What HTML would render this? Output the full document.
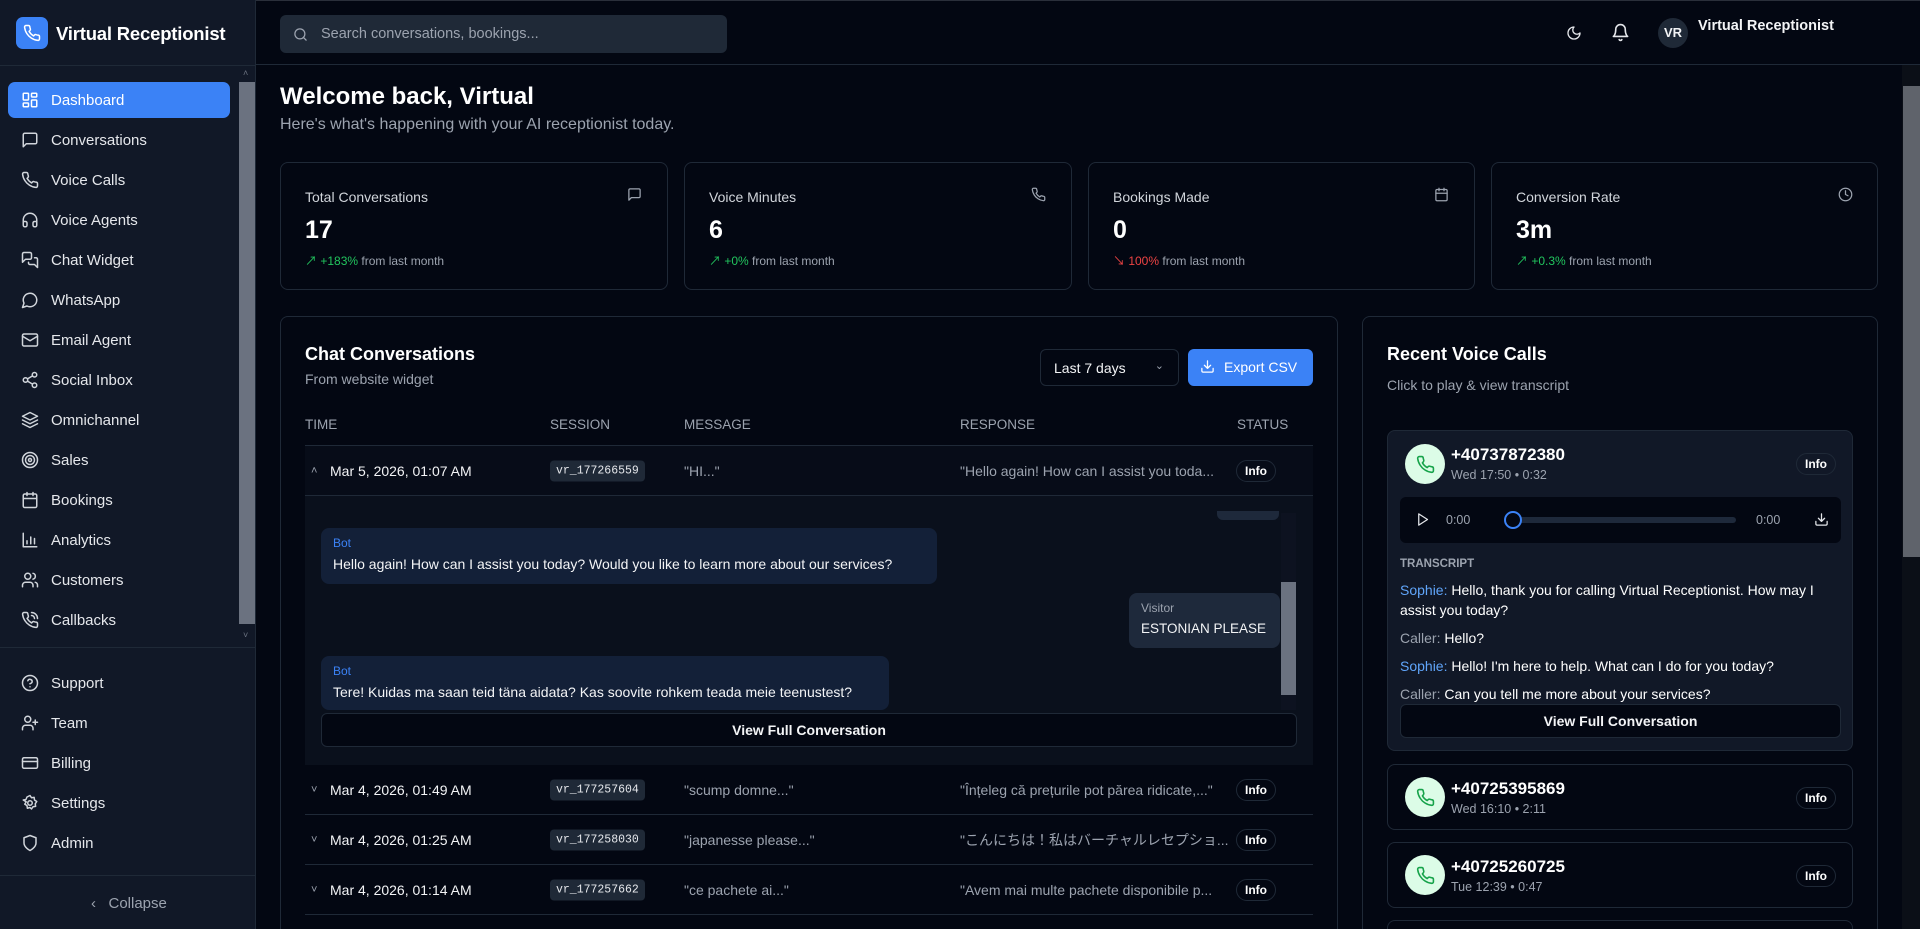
<!DOCTYPE html>
<html><head><meta charset="utf-8"><style>
*{box-sizing:border-box;margin:0;padding:0}
html,body{width:1920px;height:929px;overflow:hidden}
body{background:#030712;font-family:"Liberation Sans","Noto Sans CJK JP",sans-serif;color:#f3f4f6}
#wrap{position:relative;width:1920px;height:929px;overflow:hidden}
.abs{position:absolute}
svg{fill:none;stroke:currentColor;stroke-width:2;stroke-linecap:round;stroke-linejoin:round}
#side{left:0;top:0;width:256px;height:929px;background:#111827;border-right:1px solid #1f2937}
.logo{left:16px;top:17px;width:32px;height:32px;background:#3b82f6;border-radius:7px;display:flex;align-items:center;justify-content:center;color:#fff}
.brand{left:56px;top:23px;font-size:18.5px;font-weight:bold;color:#fff;letter-spacing:-0.2px}
.nav{position:absolute;left:8px;width:222px;height:36px;border-radius:7px;display:flex;align-items:center;font-size:15px;color:#e5e7eb}
.nav svg{width:18px;height:18px;margin-left:13px;margin-right:12px;color:#d1d5db}
.nav.act{background:#3b82f6;color:#fff}.nav.act svg{color:#fff}
.hdr{left:256px;top:0;width:1664px;height:65px;border-bottom:1px solid #1f2937;border-top:1px solid #2a2f3a}
.card{position:absolute;border:1px solid #1f2937;border-radius:8px;background:#030712}
.card.open{border-bottom:none;border-bottom-left-radius:0;border-bottom-right-radius:0}
.lbl{font-size:14px;color:#d1d5db}
.val{font-size:25px;font-weight:bold;color:#fff}
.sub{font-size:12px;color:#9ca3af}
.th{position:absolute;top:417px;font-size:13.5px;color:#9ca3af}
.row{position:absolute;left:305px;width:1008px;height:50px;border-bottom:1px solid #1f2937;font-size:14px}
.row span{position:absolute;top:50%;transform:translateY(-50%);white-space:nowrap}
.sess{background:#1f2937;font-family:"Liberation Mono",monospace;font-size:11.5px;padding:4px 6px;border-radius:4px;color:#e5e7eb}
.info{border:1px solid #1f2937;border-radius:12px;padding:3px 8px;font-size:12px;font-weight:bold;color:#fff}
.bub{position:absolute;border-radius:8px;padding:8px 12px;white-space:nowrap}
.ccard{position:absolute;left:1387px;width:466px;border:1px solid #1f2937;border-radius:8px}
.av{position:absolute;left:17px;width:40px;height:40px;border-radius:50%;background:#dcfce7;color:#16a34a;display:flex;align-items:center;justify-content:center}
.av svg{width:19px;height:19px}
.pn{position:absolute;left:63px;font-size:17px;font-weight:bold;color:#fff}
.ps{position:absolute;left:63px;font-size:12.5px;color:#9ca3af}
.tl{position:absolute;left:1400px;font-size:14px;color:#fff;width:445px;line-height:20px}
.tl b{font-weight:normal;color:#60a5fa}.tl i{font-style:normal;color:#9ca3af}
</style></head><body><div id="wrap">
<div id="side" class="abs">
 <div class="abs logo"><svg width="18" height="18" viewBox="0 0 24 24"><path d="M22 16.9v3a2 2 0 0 1-2.2 2 19.8 19.8 0 0 1-8.6-3.1 19.5 19.5 0 0 1-6-6A19.8 19.8 0 0 1 2.1 4.2 2 2 0 0 1 4.1 2h3a2 2 0 0 1 2 1.7c.1 1 .4 1.9.7 2.8a2 2 0 0 1-.5 2.1L8.1 9.9a16 16 0 0 0 6 6l1.3-1.3a2 2 0 0 1 2.1-.4c.9.3 1.8.6 2.8.7a2 2 0 0 1 1.7 2z"/></svg></div>
 <div class="abs brand">Virtual Receptionist</div>
 <div class="abs" style="left:0;top:65px;width:256px;border-top:1px solid #1f2937"></div>
 <div class="abs" style="left:239px;top:67px;width:16px;height:580px;background:#111827"></div>
 <div class="abs" style="left:239px;top:82px;width:16px;height:542px;background:#6b7280"></div>
 <div class="abs" style="left:243px;top:68px;font-size:9px;color:#6b7280">˄</div>
 <div class="abs" style="left:243px;top:630px;font-size:9px;color:#6b7280">˅</div>
 <div class="nav act" style="top:82px"><svg viewBox="0 0 24 24"><rect x="3" y="3" width="7" height="9" rx="1"/><rect x="14" y="3" width="7" height="5" rx="1"/><rect x="14" y="12" width="7" height="9" rx="1"/><rect x="3" y="16" width="7" height="5" rx="1"/></svg>Dashboard</div>
 <div class="nav" style="top:122px"><svg viewBox="0 0 24 24"><path d="M21 15a2 2 0 0 1-2 2H7l-4 4V5a2 2 0 0 1 2-2h14a2 2 0 0 1 2 2z"/></svg>Conversations</div>
 <div class="nav" style="top:162px"><svg viewBox="0 0 24 24"><path d="M22 16.9v3a2 2 0 0 1-2.2 2 19.8 19.8 0 0 1-8.6-3.1 19.5 19.5 0 0 1-6-6A19.8 19.8 0 0 1 2.1 4.2 2 2 0 0 1 4.1 2h3a2 2 0 0 1 2 1.7c.1 1 .4 1.9.7 2.8a2 2 0 0 1-.5 2.1L8.1 9.9a16 16 0 0 0 6 6l1.3-1.3a2 2 0 0 1 2.1-.4c.9.3 1.8.6 2.8.7a2 2 0 0 1 1.7 2z"/></svg>Voice Calls</div>
 <div class="nav" style="top:202px"><svg viewBox="0 0 24 24"><path d="M3 14h3a2 2 0 0 1 2 2v3a2 2 0 0 1-2 2H5a2 2 0 0 1-2-2v-7a9 9 0 0 1 18 0v7a2 2 0 0 1-2 2h-1a2 2 0 0 1-2-2v-3a2 2 0 0 1 2-2h3"/></svg>Voice Agents</div>
 <div class="nav" style="top:242px"><svg viewBox="0 0 24 24"><path d="M14 9a2 2 0 0 1-2 2H6l-4 4V4a2 2 0 0 1 2-2h8a2 2 0 0 1 2 2z"/><path d="M18 9h2a2 2 0 0 1 2 2v11l-4-4h-6a2 2 0 0 1-2-2v-1"/></svg>Chat Widget</div>
 <div class="nav" style="top:282px"><svg viewBox="0 0 24 24"><path d="M7.9 20A9 9 0 1 0 4 16.1L2 22z"/></svg>WhatsApp</div>
 <div class="nav" style="top:322px"><svg viewBox="0 0 24 24"><rect x="2" y="4" width="20" height="16" rx="2"/><path d="m22 7-10 6L2 7"/></svg>Email Agent</div>
 <div class="nav" style="top:362px"><svg viewBox="0 0 24 24"><circle cx="18" cy="5" r="3"/><circle cx="6" cy="12" r="3"/><circle cx="18" cy="19" r="3"/><path d="m8.6 13.5 6.8 4M15.4 6.5l-6.8 4"/></svg>Social Inbox</div>
 <div class="nav" style="top:402px"><svg viewBox="0 0 24 24"><path d="m12 2 10 5-10 5L2 7z"/><path d="m2 17 10 5 10-5M2 12l10 5 10-5"/></svg>Omnichannel</div>
 <div class="nav" style="top:442px"><svg viewBox="0 0 24 24"><circle cx="12" cy="12" r="10"/><circle cx="12" cy="12" r="6"/><circle cx="12" cy="12" r="2"/></svg>Sales</div>
 <div class="nav" style="top:482px"><svg viewBox="0 0 24 24"><rect x="3" y="4" width="18" height="18" rx="2"/><path d="M16 2v4M8 2v4M3 10h18"/></svg>Bookings</div>
 <div class="nav" style="top:522px"><svg viewBox="0 0 24 24"><path d="M3 3v18h18M8 17v-4M13 17V8M18 17v-7"/></svg>Analytics</div>
 <div class="nav" style="top:562px"><svg viewBox="0 0 24 24"><path d="M16 21v-2a4 4 0 0 0-4-4H6a4 4 0 0 0-4 4v2"/><circle cx="9" cy="7" r="4"/><path d="M22 21v-2a4 4 0 0 0-3-3.9M16 3.1a4 4 0 0 1 0 7.8"/></svg>Customers</div>
 <div class="nav" style="top:602px"><svg viewBox="0 0 24 24"><path d="M22 16.9v3a2 2 0 0 1-2.2 2 19.8 19.8 0 0 1-8.6-3.1 19.5 19.5 0 0 1-6-6A19.8 19.8 0 0 1 2.1 4.2 2 2 0 0 1 4.1 2h3a2 2 0 0 1 2 1.7c.1 1 .4 1.9.7 2.8a2 2 0 0 1-.5 2.1L8.1 9.9a16 16 0 0 0 6 6l1.3-1.3a2 2 0 0 1 2.1-.4c.9.3 1.8.6 2.8.7a2 2 0 0 1 1.7 2zM14 2a8 8 0 0 1 8 8M14 6a4 4 0 0 1 4 4"/></svg>Callbacks</div>
 <div class="abs" style="left:0;top:647px;width:256px;border-top:1px solid #1f2937"></div>
 <div class="nav" style="top:665px"><svg viewBox="0 0 24 24"><circle cx="12" cy="12" r="10"/><path d="M9.1 9a3 3 0 0 1 5.8 1c0 2-3 3-3 3M12 17h.01"/></svg>Support</div>
 <div class="nav" style="top:705px"><svg viewBox="0 0 24 24"><path d="M16 21v-2a4 4 0 0 0-4-4H6a4 4 0 0 0-4 4v2"/><circle cx="9" cy="7" r="4"/><path d="M19 8v6M22 11h-6"/></svg>Team</div>
 <div class="nav" style="top:745px"><svg viewBox="0 0 24 24"><rect x="2" y="5" width="20" height="14" rx="2"/><path d="M2 10h20"/></svg>Billing</div>
 <div class="nav" style="top:785px"><svg viewBox="0 0 24 24"><circle cx="12" cy="12" r="3"/><path d="M12 2l2 3 3.5-.5.5 3.5 3 2-2 3 .5 3.5-3.5.5-2 3-2-2-3.5 1-.5-3.5-3-2 2-3L3 8l3.5-.5L8 4z"/></svg>Settings</div>
 <div class="nav" style="top:825px"><svg viewBox="0 0 24 24"><path d="M12 22s8-4 8-10V5l-8-3-8 3v7c0 6 8 10 8 10z"/></svg>Admin</div>
 <div class="abs" style="left:0;top:875px;width:256px;border-top:1px solid #1f2937"></div>
 <div class="abs" style="left:91px;top:895px;font-size:15px;color:#9ca3af">‹&nbsp;&nbsp;&nbsp;Collapse</div>
</div>

<div class="abs hdr"></div>
<div class="abs" style="left:280px;top:15px;width:447px;height:38px;background:#1f2937;border-radius:6px;font-size:14.5px;color:#9ca3af;padding:11px 0 0 41px">Search conversations, bookings...
 <svg class="abs" style="left:13px;top:12px;width:15px;height:15px" viewBox="0 0 24 24"><circle cx="11" cy="11" r="8"/><path d="m21 21-4.3-4.3"/></svg></div>
<svg class="abs" style="left:1566px;top:25px;width:16px;height:16px;color:#e5e7eb" viewBox="0 0 24 24"><path d="M12 3a6 6 0 0 0 9 9 9 9 0 1 1-9-9z"/></svg>
<svg class="abs" style="left:1611px;top:23px;width:19px;height:19px;color:#e5e7eb" viewBox="0 0 24 24"><path d="M6 8a6 6 0 0 1 12 0c0 7 3 9 3 9H3s3-2 3-9M10.3 21a1.9 1.9 0 0 0 3.4 0"/></svg>
<div class="abs" style="left:1658px;top:18px;width:30px;height:30px;border-radius:50%;background:#1f2937;font-size:13px;font-weight:bold;text-align:center;line-height:30px">VR</div>
<div class="abs" style="left:1698px;top:18px;font-size:14.5px;font-weight:bold">Virtual Receptionist</div>
<div class="abs" style="left:1902px;top:65px;width:18px;height:864px;background:#0b0f17"></div>
<div class="abs" style="left:1903px;top:86px;width:17px;height:471px;background:#5f636b"></div>

<div class="abs" style="left:280px;top:83px;font-size:24px;font-weight:bold;color:#fff">Welcome back, Virtual</div>
<div class="abs" style="left:280px;top:116px;font-size:16px;color:#9ca3af">Here's what's happening with your AI receptionist today.</div>

<div class="card" style="left:280px;top:162px;width:388px;height:128px"></div>
<div class="card" style="left:684px;top:162px;width:388px;height:128px"></div>
<div class="card" style="left:1088px;top:162px;width:387px;height:128px"></div>
<div class="card" style="left:1491px;top:162px;width:387px;height:128px"></div>
<div class="abs lbl" style="left:305px;top:189px">Total Conversations</div><div class="abs val" style="left:305px;top:216px">17</div><div class="abs sub" style="left:305px;top:252px"><span style="color:#22c55e">↗ +183%</span> from last month</div>
<div class="abs lbl" style="left:709px;top:189px">Voice Minutes</div><div class="abs val" style="left:709px;top:216px">6</div><div class="abs sub" style="left:709px;top:252px"><span style="color:#22c55e">↗ +0%</span> from last month</div>
<div class="abs lbl" style="left:1113px;top:189px">Bookings Made</div><div class="abs val" style="left:1113px;top:216px">0</div><div class="abs sub" style="left:1113px;top:252px"><span style="color:#ef4444">↘ 100%</span> from last month</div>
<div class="abs lbl" style="left:1516px;top:189px">Conversion Rate</div><div class="abs val" style="left:1516px;top:216px">3m</div><div class="abs sub" style="left:1516px;top:252px"><span style="color:#22c55e">↗ +0.3%</span> from last month</div>
<svg class="abs" style="left:627px;top:187px;width:15px;height:15px;color:#9ca3af" viewBox="0 0 24 24"><path d="M21 15a2 2 0 0 1-2 2H7l-4 4V5a2 2 0 0 1 2-2h14a2 2 0 0 1 2 2z"/></svg>
<svg class="abs" style="left:1031px;top:187px;width:15px;height:15px;color:#9ca3af" viewBox="0 0 24 24"><path d="M22 16.9v3a2 2 0 0 1-2.2 2 19.8 19.8 0 0 1-8.6-3.1 19.5 19.5 0 0 1-6-6A19.8 19.8 0 0 1 2.1 4.2 2 2 0 0 1 4.1 2h3a2 2 0 0 1 2 1.7c.1 1 .4 1.9.7 2.8a2 2 0 0 1-.5 2.1L8.1 9.9a16 16 0 0 0 6 6l1.3-1.3a2 2 0 0 1 2.1-.4c.9.3 1.8.6 2.8.7a2 2 0 0 1 1.7 2z"/></svg>
<svg class="abs" style="left:1434px;top:187px;width:15px;height:15px;color:#9ca3af" viewBox="0 0 24 24"><rect x="3" y="4" width="18" height="18" rx="2"/><path d="M16 2v4M8 2v4M3 10h18"/></svg>
<svg class="abs" style="left:1838px;top:187px;width:15px;height:15px;color:#9ca3af" viewBox="0 0 24 24"><circle cx="12" cy="12" r="10"/><path d="M12 6v6l4 2"/></svg>

<div class="card open" style="left:280px;top:316px;width:1058px;height:613px"></div>
<div class="abs" style="left:305px;top:344px;font-size:18px;font-weight:bold;color:#fff">Chat Conversations</div>
<div class="abs" style="left:305px;top:371px;font-size:14px;color:#9ca3af">From website widget</div>
<div class="abs" style="left:1040px;top:349px;width:139px;height:37px;border:1px solid #1f2937;border-radius:6px;font-size:14px;padding:10px 0 0 13px">Last 7 days<span style="position:absolute;right:14px;top:9px;color:#9ca3af;font-size:11px">⌄</span></div>
<div class="abs" style="left:1188px;top:349px;width:125px;height:37px;background:#3b82f6;border-radius:6px;font-size:14px;padding:10px 0 0 36px;color:#fff">Export CSV
 <svg class="abs" style="left:12px;top:10px;width:15px;height:15px" viewBox="0 0 24 24"><path d="M21 15v4a2 2 0 0 1-2 2H5a2 2 0 0 1-2-2v-4M7 10l5 5 5-5M12 15V3"/></svg></div>
<div class="th" style="left:305px">TIME</div><div class="th" style="left:550px">SESSION</div><div class="th" style="left:684px">MESSAGE</div><div class="th" style="left:960px">RESPONSE</div><div class="th" style="left:1237px">STATUS</div>
<div class="abs" style="left:305px;top:445px;width:1008px;border-top:1px solid #1f2937"></div>
<div class="row" style="top:446px;height:50px;background:#070c18">
 <span style="left:6px;color:#9ca3af;font-size:11px">˄</span><span style="left:25px">Mar 5, 2026, 01:07 AM</span>
 <span class="sess" style="left:245px">vr_177266559</span><span style="left:379px;color:#9ca3af">"HI..."</span>
 <span style="left:655px;color:#9ca3af">"Hello again! How can I assist you toda...</span><span class="info" style="left:931px">Info</span></div>
<div class="abs" style="left:305px;top:496px;width:1008px;height:269px;background:#0a101c"></div>
<div class="abs" style="left:1217px;top:511px;width:62px;height:9px;background:#1e293b;border-radius:0 0 6px 6px"></div>
<div class="bub" style="left:321px;top:528px;width:616px;height:56px;background:#132038"><div style="font-size:12px;color:#3b82f6">Bot</div><div style="font-size:14px;margin-top:6px">Hello again! How can I assist you today? Would you like to learn more about our services?</div></div>
<div class="bub" style="left:1129px;top:593px;width:151px;height:55px;background:#1e293b;padding-right:6px"><div style="font-size:12px;color:#9ca3af">Visitor</div><div style="font-size:13.5px;margin-top:6px">ESTONIAN PLEASE</div></div>
<div class="bub" style="left:321px;top:656px;width:568px;height:54px;background:#132038"><div style="font-size:12px;color:#3b82f6">Bot</div><div style="font-size:14px;margin-top:6px">Tere! Kuidas ma saan teid täna aidata? Kas soovite rohkem teada meie teenustest?</div></div>
<div class="abs" style="left:1281px;top:513px;width:15px;height:197px;background:#0d1220"></div>
<div class="abs" style="left:1281px;top:582px;width:15px;height:113px;background:#6b7280"></div>
<div class="abs" style="left:321px;top:713px;width:976px;height:34px;border:1px solid #1f2937;border-radius:6px;background:#030712;font-size:14px;font-weight:bold;text-align:center;line-height:32px">View Full Conversation</div>
<div class="row" style="top:765px"><span style="left:6px;color:#9ca3af;font-size:11px">˅</span><span style="left:25px">Mar 4, 2026, 01:49 AM</span><span class="sess" style="left:245px">vr_177257604</span><span style="left:379px;color:#9ca3af">"scump domne..."</span><span style="left:655px;color:#9ca3af">"Înțeleg că prețurile pot părea ridicate,..."</span><span class="info" style="left:931px">Info</span></div>
<div class="row" style="top:815px"><span style="left:6px;color:#9ca3af;font-size:11px">˅</span><span style="left:25px">Mar 4, 2026, 01:25 AM</span><span class="sess" style="left:245px">vr_177258030</span><span style="left:379px;color:#9ca3af">"japanesse please..."</span><span style="left:655px;color:#9ca3af">"こんにちは！私はバーチャルレセプショ...</span><span class="info" style="left:931px">Info</span></div>
<div class="row" style="top:865px"><span style="left:6px;color:#9ca3af;font-size:11px">˅</span><span style="left:25px">Mar 4, 2026, 01:14 AM</span><span class="sess" style="left:245px">vr_177257662</span><span style="left:379px;color:#9ca3af">"ce pachete ai..."</span><span style="left:655px;color:#9ca3af">"Avem mai multe pachete disponibile p...</span><span class="info" style="left:931px">Info</span></div>

<div class="card open" style="left:1362px;top:316px;width:516px;height:613px"></div>
<div class="abs" style="left:1387px;top:344px;font-size:18px;font-weight:bold;color:#fff">Recent Voice Calls</div>
<div class="abs" style="left:1387px;top:377px;font-size:14px;color:#9ca3af">Click to play &amp; view transcript</div>
<div class="ccard" style="top:430px;height:321px;background:#111827">
 <div class="av" style="top:13px"><svg viewBox="0 0 24 24"><path d="M22 16.9v3a2 2 0 0 1-2.2 2 19.8 19.8 0 0 1-8.6-3.1 19.5 19.5 0 0 1-6-6A19.8 19.8 0 0 1 2.1 4.2 2 2 0 0 1 4.1 2h3a2 2 0 0 1 2 1.7c.1 1 .4 1.9.7 2.8a2 2 0 0 1-.5 2.1L8.1 9.9a16 16 0 0 0 6 6l1.3-1.3a2 2 0 0 1 2.1-.4c.9.3 1.8.6 2.8.7a2 2 0 0 1 1.7 2z"/></svg></div>
 <div class="pn" style="top:14px">+40737872380</div><div class="ps" style="top:37px">Wed 17:50 • 0:32</div>
 <span class="info abs" style="left:408px;top:22px;border-color:#1f2937">Info</span>
 <div class="abs" style="left:12px;top:66px;width:441px;height:46px;background:#030712;border-radius:6px;font-size:12.5px;color:#9ca3af">
  <svg class="abs" style="left:15px;top:15px;width:15px;height:15px;color:#e5e7eb" viewBox="0 0 24 24"><path d="M6 3l14 9-14 9z"/></svg>
  <span class="abs" style="left:46px;top:16px">0:00</span>
  <div class="abs" style="left:110px;top:20px;width:226px;height:6px;background:#1e293b;border-radius:3px"></div>
  <div class="abs" style="left:104px;top:14px;width:18px;height:18px;border:2px solid #3b82f6;border-radius:50%;background:#030712"></div>
  <span class="abs" style="left:356px;top:16px">0:00</span>
  <svg class="abs" style="left:414px;top:15px;width:15px;height:15px;color:#e5e7eb" viewBox="0 0 24 24"><path d="M21 15v4a2 2 0 0 1-2 2H5a2 2 0 0 1-2-2v-4M7 10l5 5 5-5M12 15V3"/></svg>
 </div>
 <div class="abs" style="left:12px;top:127px;font-size:11.5px;color:#9ca3af;font-weight:bold">TRANSCRIPT</div>
</div>
<div class="tl" style="top:580px"><b>Sophie:</b> Hello, thank you for calling Virtual Receptionist. How may I assist you today?</div>
<div class="tl" style="top:628px"><i>Caller:</i> Hello?</div>
<div class="tl" style="top:656px"><b>Sophie:</b> Hello! I'm here to help. What can I do for you today?</div>
<div class="tl" style="top:684px"><i>Caller:</i> Can you tell me more about your services?</div>
<div class="abs" style="left:1400px;top:704px;width:441px;height:34px;background:#030712;border:1px solid #1f2937;border-radius:6px;font-size:14px;font-weight:bold;text-align:center;line-height:32px">View Full Conversation</div>
<div class="ccard" style="top:764px;height:66px">
 <div class="av" style="top:12px"><svg viewBox="0 0 24 24"><path d="M22 16.9v3a2 2 0 0 1-2.2 2 19.8 19.8 0 0 1-8.6-3.1 19.5 19.5 0 0 1-6-6A19.8 19.8 0 0 1 2.1 4.2 2 2 0 0 1 4.1 2h3a2 2 0 0 1 2 1.7c.1 1 .4 1.9.7 2.8a2 2 0 0 1-.5 2.1L8.1 9.9a16 16 0 0 0 6 6l1.3-1.3a2 2 0 0 1 2.1-.4c.9.3 1.8.6 2.8.7a2 2 0 0 1 1.7 2z"/></svg></div>
 <div class="pn" style="top:14px">+40725395869</div><div class="ps" style="top:37px">Wed 16:10 • 2:11</div><span class="info abs" style="left:408px;top:22px">Info</span></div>
<div class="ccard" style="top:842px;height:66px">
 <div class="av" style="top:12px"><svg viewBox="0 0 24 24"><path d="M22 16.9v3a2 2 0 0 1-2.2 2 19.8 19.8 0 0 1-8.6-3.1 19.5 19.5 0 0 1-6-6A19.8 19.8 0 0 1 2.1 4.2 2 2 0 0 1 4.1 2h3a2 2 0 0 1 2 1.7c.1 1 .4 1.9.7 2.8a2 2 0 0 1-.5 2.1L8.1 9.9a16 16 0 0 0 6 6l1.3-1.3a2 2 0 0 1 2.1-.4c.9.3 1.8.6 2.8.7a2 2 0 0 1 1.7 2z"/></svg></div>
 <div class="pn" style="top:14px">+40725260725</div><div class="ps" style="top:37px">Tue 12:39 • 0:47</div><span class="info abs" style="left:408px;top:22px">Info</span></div>
<div class="ccard" style="top:920px;height:9px;border-bottom:none;border-bottom-left-radius:0;border-bottom-right-radius:0"></div>
</div></body></html>
